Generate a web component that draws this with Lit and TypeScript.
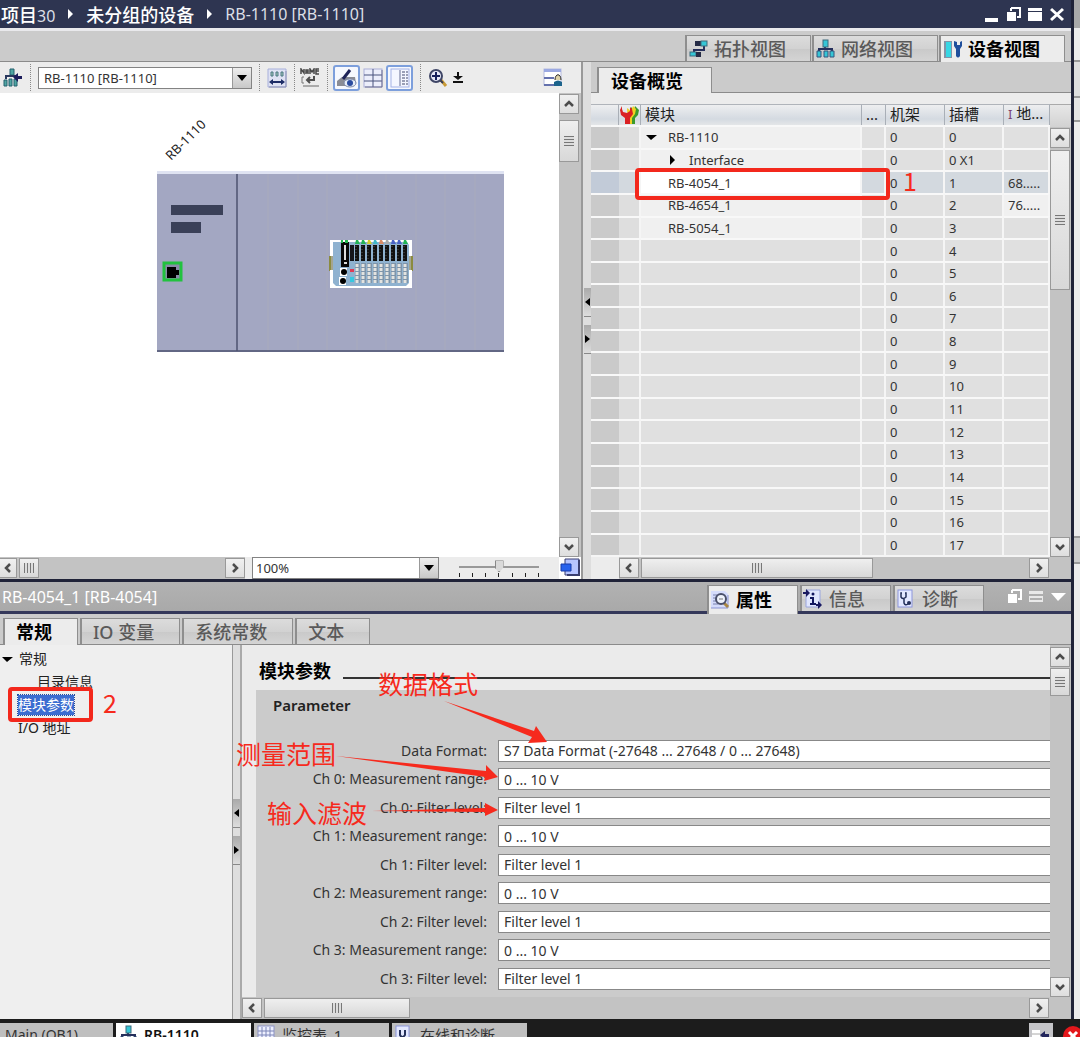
import { LitElement, html, svg, css, nothing } from "lit";
import { customElement } from "lit/decorators.js";
import { classMap } from "lit/directives/class-map.js";

interface DeviceRow {
  name: string;
  rack: string;
  slot: string;
  address: string;
  level: number;
  marker?: "open" | "closed";
}

const modules: DeviceRow[] = [
  { name: "RB-1110", rack: "0", slot: "0", address: "", level: 1, marker: "open" },
  { name: "Interface", rack: "0", slot: "0 X1", address: "", level: 2, marker: "closed" },
  { name: "RB-4054_1", rack: "0", slot: "1", address: "68.....", level: 1 },
  { name: "RB-4654_1", rack: "0", slot: "2", address: "76.....", level: 1 },
  { name: "RB-5054_1", rack: "0", slot: "3", address: "", level: 1 },
];
for (let slot = 4; slot <= 17; slot++) {
  modules.push({ name: "", rack: "0", slot: String(slot), address: "", level: 1 });
}

const parameters: Array<[string, string]> = [
  ["Data Format:", "S7 Data Format (-27648 ... 27648 / 0 ... 27648)"],
];
for (let channel = 0; channel < 4; channel++) {
  parameters.push([`Ch ${channel}: Measurement range:`, "0 ... 10 V"]);
  parameters.push([`Ch ${channel}: Filter level:`, "Filter level 1"]);
}

const icon = (body: unknown, w = 20, h = 20) =>
  html`<svg class="icon" width=${w} height=${h} viewBox="0 0 ${w} ${h}" aria-hidden="true">${body}</svg>`;

const icons = {
  topology: icon(svg`
    <path d="M15 7v4H5v3" fill="none" stroke="#26305c" stroke-width="2"/>
    <rect x="6" y="2" width="6" height="5" fill="#252b45"/><rect x="12" y="2" width="6" height="5" fill="#35c6d6" stroke="#3c6a7c"/>
    <rect x="1" y="13" width="6" height="4" fill="#35c6d6" stroke="#3c6a7c"/><rect x="7" y="13" width="5" height="5" fill="#252b45"/>`),
  network: icon(svg`
    <path d="M9 6v5M3 13v-3h13v3" fill="none" stroke="#26305c" stroke-width="2"/>
    <rect x="7" y="1" width="5" height="7" fill="#35c6d6" stroke="#3c6a7c"/>
    <path d="M1 12h4v6H1zM8 12h4v6H8zM14 12h4v6h-4z" fill="#35c6d6" stroke="#36557c"/>`),
  device: icon(svg`
    <rect x="1" y="2" width="8" height="17" fill="#8294a8"/><rect x="3" y="3" width="5" height="15" fill="#36d6e4"/>
    <path d="M11 2v5l2 3v7q2 3 4 0v-7l2-3V2l-2 1v3h-3V3z" fill="#1f4f9c"/>`),
  goUp: icon(svg`
    <path d="M7 1h4v6H7zM1 12h3v6H1zM6 11h3v7H6zM11 11h3v7h-3z" fill="#4fa5a2" stroke="#24616f"/>
    <path d="M3 11V8h11" fill="none" stroke="#28385e" stroke-width="2"/>
    <path d="M10 9l5-4v3h4v3h-4v3z" fill="#1c1c5c"/>`),
  arrange: icon(svg`
    <path d="M1 1h18v18H1z" fill="#dfe2f3" stroke="#a8b0dc"/><path d="M2 19h17V3" fill="none" stroke="#8d92b4"/>
    <path d="M4 4h2v4H4zM9 4h2v4H9zM14 4h2v4h-2z" fill="#a6ccb8" stroke="#4a7782"/>
    <path d="M2 14l4-3v2h8v-2l4 3-4 3v-2H6v2z" fill="#1d2c66"/>`),
  name: icon(svg`
    <path d="M1 6V1l3 4V1M6 6V2h2v4M6 4h2M10 6V1l2 3 2-3v5M19 1h-3v5h3M16 3h3" fill="none" stroke="#484848" stroke-width="1.5"/>
    <path d="M4 9H2v6h2" fill="none" stroke="#777"/><path d="M3 18h16" stroke="#aaa" stroke-width="2"/>
    <path d="M14 8v4H7M10 9l-3 3 3 3" fill="none" stroke="#505050" stroke-width="2"/>`),
  display: icon(svg`
    <path d="M0 13l5-4h13l1 6-4 3H0z" fill="#8a8c95"/><path d="M6 11l7-9" stroke="#1e2358" stroke-width="3"/>
    <ellipse cx="13" cy="15" rx="6" ry="4" fill="#e7edf7" stroke="#7a87a8"/><circle cx="13" cy="15" r="3" fill="#2b4ca0"/>`, 20, 20),
  grid: icon(svg`
    <rect x="1" y="1" width="18" height="18" fill="#eceefb" stroke="#a9aed8"/>
    <path d="M10 1v18M1 7h18M1 13h18" stroke="#49527c"/><path d="M2 19h17V2" stroke="#6e7192" fill="none"/>`),
  panels: icon(svg`
    <rect x="1" y="1" width="18" height="18" fill="#f4f6ff" stroke="#a4b2e6"/>
    <path d="M10 2v16" stroke="#666e92" stroke-width="1"/>
    <path d="M12 4h3M12 7h3M12 10h3M12 13h3M12 16h3M16 4h2M16 7h2M16 10h2M16 13h2M16 16h2" stroke="#41496e"/>`),
  zoom: icon(svg`
    <path d="M13 12l5 6" stroke="#c99a35" stroke-width="3"/><path d="M12 12l3 3" stroke="#343a56" stroke-width="2"/>
    <circle cx="8" cy="8" r="6" fill="#e7e9f8" stroke="#3f4666" stroke-width="2"/><path d="M4 8h8M8 4v8" stroke="#16205c" stroke-width="2"/>`),
  down: icon(svg`<path d="M4 1h2v4h4L5 9 0 5h4zM0 10h10v2H0z" fill="#111"/>`, 10, 13),
  layout: icon(svg`
    <rect x="1" y="1" width="17" height="16" fill="#fff" stroke="#b3b9de"/><path d="M1 1h17v3H1z" fill="#9ba9e2"/>
    <path d="M1 10h10M1 17h10" stroke="#6471ad" stroke-width="2"/><path d="M12 12c0-7 6-7 6 0" fill="#ddd2a8" stroke="#2a2a2a"/>
    <path d="M11 18v-4q4-3 8 0v4z" fill="#1c638c"/>`),
  wrench: icon(svg`
    <path d="M12 2l3 3 1-4 4 4-1 5-3 3v6h-4v-8z" fill="#3c9a2d"/><path d="M8 3l4 3 2-5 3 3-1 5-3 4v6h-4z" fill="#f0d022"/>
    <path d="M3 1L1 5l1 5 4 3v6h5v-6l3-4-1-5-2-2v4l-3 2-4-1-1-3z" fill="#da2023"/>`),
  properties: icon(svg`
    <path d="M1 1h14l3 3v14H1z" fill="#d5dcfb"/><path d="M1 18h17V5" stroke="#8792d2" fill="none"/>
    <path d="M3 5h4M3 8h3M3 11h4M3 14h5" stroke="#7881ae"/><path d="M14 13l4 4" stroke="#a98743" stroke-width="3"/>
    <circle cx="11" cy="9" r="5" fill="#eef2fb" stroke="#4a506a" stroke-width="2"/><path d="M9 9h4" stroke="#777"/>`),
  info: icon(svg`
    <path d="M3 1h14v17H3z" fill="#dfe5fd" stroke="#9aa5dd"/><circle cx="10" cy="5" r="1.5" fill="#11165f"/>
    <path d="M7 9h3v6M7 15h6" fill="none" stroke="#11165f" stroke-width="2"/>
    <path d="M0 3h3V0l4 4-4 4V5H0zM13 15h2v-3l4 4-4 4v-3h-2z" fill="#191960"/>`),
  diagnosis: icon(svg`
    <rect x="2" y="1" width="14" height="17" fill="#e3e8ff" stroke="#8c96dc"/>
    <path d="M6 4H5v4q2 3 5 0V4H9M8 10v4q1 3 4 1" fill="none" stroke="#25305a" stroke-width="1.5"/><circle cx="13" cy="14" r="2" fill="#25305a"/>`),
  overview: icon(svg`
    <path d="M5 1h14v16H5z" fill="#b6c4ff" stroke="#3a3f70"/><path d="M7 17h12V2" fill="none" stroke="#3a3f70" stroke-width="2"/>
    <path d="M1 6h10v7H1z" fill="#2862ed" stroke="#173baa"/>`),
  restore: icon(svg`<path d="M5 1h9v9h-3M5 4V1" fill="none" stroke="#fff" stroke-width="2"/><path d="M1 5h9v9H1z" fill="#fff"/>`, 15, 15),
  minimize: icon(svg`<path d="M1 11h13v4H1z" fill="#fff"/>`, 15, 15),
  maximize: icon(svg`<path d="M0 1h14v3H0zM0 5h14v9H0z" fill="#fff"/>`, 15, 15),
  close: icon(svg`<path d="M1 2l12 11M13 2L1 13" stroke="#fff" stroke-width="3"/>`, 15, 15),
  split: icon(svg`<path d="M0 2h14v3H0zM0 7h14v6H0z" fill="#e9e9e9"/><path d="M1 9h12v2H1z" fill="#b0b0b0"/>`, 15, 15),
  collapse: icon(svg`<path d="M0 4h15L7 12z" fill="#fff"/>`, 15, 15),
  sheet: icon(svg`
    <rect x="1" y="1" width="16" height="18" fill="#eef0ff" stroke="#8d94c8"/>
    <path d="M1 6h16M1 10h16M1 14h16M5 2v16M9 2v16M13 2v16" stroke="#7d86b8"/>`),
  online: icon(svg`<rect x="1" y="1" width="13" height="18" fill="#e3e8ff" stroke="#8c96dc"/><path d="M5 5v5q2 4 5 0V5" fill="none" stroke="#25305a" stroke-width="2"/>`),
};

const chevrons: Record<string, string> = {
  up: "M2 8l4-4 4 4",
  down: "M2 4l4 4 4-4",
  left: "M8 2L4 6l4 4",
  right: "M4 2l4 4-4 4",
};

const arrowButton = (dir: string, label: string) => html`
  <button class="scroll-btn" aria-label=${label}>
    <svg width="12" height="12" viewBox="0 0 12 12" aria-hidden="true">
      <path d=${chevrons[dir]} fill="none" stroke="#4c4c4c" stroke-width="2.5" />
    </svg>
  </button>`;

const scrollBar = (vertical: boolean, variant: string) => html`
  <div class="scroll ${vertical ? "vertical" : "horizontal"} ${variant}">
    ${arrowButton(vertical ? "up" : "left", vertical ? "向上滚动" : "向左滚动")}
    <div class="thumb"><i class="grip"></i></div>
    <div class="track"></div>
    ${arrowButton(vertical ? "down" : "right", vertical ? "向下滚动" : "向右滚动")}
  </div>`;

const triangle = (dir: "open" | "closed") => html`
  <svg class="marker" width="12" height="12" viewBox="0 0 12 12" aria-hidden="true">
    <path d=${dir === "open" ? "M1 4h11L6 9z" : "M4 1v10l5-5z"} fill="#000" />
  </svg>`;

const splitter = (variant: string) => html`
  <div class="splitter ${variant}">
    <button class="split-btn" aria-label="向左折叠"><svg width="5" height="8" viewBox="0 0 5 8"><path d="M5 0v8L0 4z" /></svg></button>
    <button class="split-btn" aria-label="向右折叠"><svg width="5" height="8" viewBox="0 0 5 8"><path d="M0 0v8l5-4z" /></svg></button>
  </div>`;

@customElement("app-root")
export class AppRoot extends LitElement {
  static styles = css`
    :host {
      display: block;
      font-family: "Noto Sans", "Noto Sans CJK SC", sans-serif;
      font-size: 13px;
      color: #333;
    }
    * { box-sizing: border-box; }
    button, input, select { font: inherit; color: inherit; margin: 0; padding: 0; border-radius: 0; }
    button { background: none; border: 0; }
    .icon, svg { display: block; flex: none; }

    .screen { position: relative; display: flex; flex-direction: column; height: 100vh; overflow: hidden; background: #cbcbcb; }
    .desk { display: flex; flex: 1; min-height: 0; }
    .window { display: flex; flex-direction: column; flex: 1; min-width: 0; border-right: 3px solid #202338; }
    .neighbour { display: flex; flex-direction: column; width: 6px; background: #ececec; }
    .neighbour i { border-bottom: 2px solid #999; }
    .neighbour .n1 { height: 28px; background: #a9a9a9; border: 0; }
    .neighbour .n2 { height: 34px; }
    .neighbour .n3 { height: 36px; background: #dedede; }
    .neighbour .n4 { height: 24px; background: #e4e4e4; }
    .neighbour .n5 { height: 416px; }
    .neighbour .n6 { height: 26px; background: #ccc; }

    .titlebar { display: flex; align-items: center; gap: 13px; height: 28px; flex: none; padding: 0 6px 0 1px; background: #2e3551; color: #dcdfe6; font-size: 16px; }
    .cjk { font-size: 18px; font-weight: 500; color: #fff; }
    .controls { display: flex; gap: 7px; margin-left: auto; }

    .view-tabs { display: flex; justify-content: flex-end; align-items: flex-end; gap: 1px; height: 34px; flex: none; padding: 0 6px 0 0; border-top: 3px solid #e9e9ec; border-bottom: 1px solid #8b8b8b; background: #cbcbcb; }
    .tab { display: flex; align-items: center; height: 26px; padding: 0 2px; border: 1px solid #8e8e8e; border-left-width: 2px; border-bottom: 0; background: linear-gradient(#dcdcdc, #d2d2d2 50%, #c9c9c9 51%, #d4d4d4); color: #5a5a5a; font-size: 18px; font-weight: 500; line-height: 22px; white-space: nowrap; }
    .tab.active { background: #ececec; color: #000; font-weight: 700; }
    .view-tabs .tab { width: 126px; gap: 5px; }
    .view-tabs .active { margin-bottom: -1px; height: 27px; }

    .editor { display: flex; flex: 519 1 0; min-height: 0; border-bottom: 3px solid #202338; }
    .graphic { display: flex; flex-direction: column; flex: 581 1 0; min-width: 0; background: #ececec; }
    .toolbar { display: flex; align-items: center; height: 31px; flex: none; padding: 0 18px 0 3px; gap: 5px; }
    .tool { display: grid; place-items: center; width: 20px; height: 26px; }
    .tool.on { width: 27px; border: 2px solid #7d9fdc; border-radius: 3px; background: #f6f8fe; }
    .toggles { display: flex; gap: 3px; }
    .sep { height: 27px; margin: 0 2px; border-left: 1px dotted #888; }
    .tool + .sep + .toggles, .tool + .sep + .tool { margin-left: -2px; }
    .spring { flex: 1; }
    .combo { display: flex; height: 22px; border: 1px solid #838383; background: #fff; }
    .combo select { appearance: none; flex: 1; min-width: 0; border: 0; padding: 0 5px; background: #fff; outline: none; }
    .drop { display: grid; place-items: center; width: 19px; border-left: 1px solid #999; background: linear-gradient(#eee, #c8c8c8); }
    .device-select { width: 214px; }
    .zoom-select select { padding: 0 3px; }
    .canvas-row { display: flex; flex: 1; min-height: 0; }
    .canvas { flex: 1; min-width: 0; overflow: hidden; background: #fff; }
    .canvas text { font-size: 13px; fill: #222; }
    .status { display: flex; height: 22px; flex: none; }
    .zoom-select { width: 187px; margin-left: 7px; }
    .slider { display: flex; flex-direction: column; width: 80px; margin: 2px 20px 0; }
    .slider input { appearance: none; width: 100%; height: 14px; background: linear-gradient(#999, #999) 0 7px / 100% 2px no-repeat; }
    .slider input::-webkit-slider-thumb { appearance: none; width: 9px; height: 12px; background: #d9d9d9; border: 1px solid #888; clip-path: polygon(0 0, 100% 0, 100% 60%, 50% 100%, 0 60%); }
    .ticks { display: flex; justify-content: space-between; }
    .ticks i { width: 1px; height: 4px; background: #222; }
    .corner { display: grid; place-items: center; width: 22px; background: #fff; }

    .scroll { display: flex; background: #c3c3c3; flex: none; gap: 2px; }
    .vertical { flex-direction: column; width: 21px; }
    .horizontal { height: 22px; padding: 1px 0; }
    .scroll-btn { display: grid; place-items: center; width: 20px; height: 20px; flex: none; border: 1px solid #999; background: linear-gradient(#f0f0f0, #dedede); }
    .thumb { display: grid; place-items: center; flex: none; border: 1px solid #999; background: linear-gradient(#efefef, #d8d8d8); }
    .vertical .thumb { width: 20px; }
    .horizontal .thumb { height: 20px; }
    .track { flex: 1; }
    .grip { width: 10px; height: 10px; background: repeating-linear-gradient(#777 0 1px, #ddd 1px 3px); }
    .horizontal .grip { background: repeating-linear-gradient(90deg, #777 0 1px, #ddd 1px 3px); }
    .canvas-v { width: 22px; padding-top: 1px; }
    .canvas-v .thumb { height: 42px; margin-top: 4px; }
    .canvas-h { flex: 1; }
    .canvas-h .thumb { width: 20px; }
    .canvas-h .scroll-btn:first-child { width: 17px; border-left: 0; }
    .table-v { padding-top: 1px; }
    .table-v .thumb { height: 140px; }
    .table-h { margin-left: 28px; }
    .table-h .thumb { width: 232px; }
    .table-h, .param-h { padding-right: 22px; }
    .param-v { padding-top: 2px; gap: 1px; }
    .param-v .thumb { height: 28px; }
    .param-h .thumb { width: 146px; }

    .splitter { display: flex; flex-direction: column; align-items: flex-end; justify-content: center; gap: 8px; flex: none; width: 10px; border-left: 2px solid #999; background: #dedede; }
    .splitter.inner { align-items: flex-start; border-left: 1px solid #999; border-right: 2px solid #aaa; }
    .split-btn { display: grid; place-items: center; width: 7px; height: 29px; border-bottom: 1px solid #888; background: linear-gradient(#aaa, #ddd); }

    .overview { display: flex; flex-direction: column; flex: 480 1 0; min-width: 0; background: #ececec; }
    .overview-tabs { display: flex; align-items: flex-end; height: 31px; flex: none; padding-left: 6px; border-bottom: 1px solid #8b8b8b; background: #cbcbcb; }
    .overview-tabs .tab { width: 115px; margin-bottom: -1px; padding-left: 12px; }
    .table-row { display: flex; flex: 1; min-height: 0; margin-top: 11px; }
    .table-wrap { flex: 1; min-width: 0; border-bottom: 2px solid #f5f5f5; }
    .table-side { display: flex; flex-direction: column; background: #d5d5d5; }
    .table-side::before { content: ""; height: 22px; border-top: 1px solid #aaa; background: linear-gradient(#e7e7e7, #d2d2d2); }
    .table-side .scroll { flex: 1; }
    table { width: 100%; height: 100%; border-collapse: separate; border-spacing: 0; table-layout: fixed; }
    th { height: 21px; padding: 0 4px 2px; border-top: 1px solid #b0b4ba; border-right: 1px solid #a9afb7; background: linear-gradient(#eeeff0, #d4dae1 70%, #e4e6e8); color: #222; font-size: 15px; font-weight: 400; line-height: 17px; text-align: left; white-space: nowrap; overflow: hidden; }
    th.tools { padding: 0; }
    th .mark { color: #7b3f70; font-size: 13px; }
    td { padding: 0 4px; border-top: 2px solid #f8f8f8; border-right: 2px solid #f5f5f5; background: #e0e0e0; line-height: 18px; white-space: nowrap; overflow: hidden; }
    td.rowhead { border-right: 0; background: #cacaca; }
    td.tools { background: #dedede; }
    td.filled { background: #f0f0f0; }
    .selected td { background: #d3d9df; }
    .selected td.rowhead { background: #c2cbd8; }
    .selected td.filled { background: #fff; }
    .selected td.addr { background: #d3d9df; }
    .cell { display: flex; align-items: center; padding-left: 23px; }
    .cell.marked { gap: 11px; padding-left: 0; }
    .cell.level-2 { padding-left: 21px; }
    .col-head { width: 28px; } .col-tools { width: 22px; } .col-dots { width: 24px; }
    .col-rack, .col-slot { width: 59px; } .col-addr { width: 46px; }

    .inspector { display: flex; flex-direction: column; flex: 438 1 0; min-height: 0; }
    .inspector-bar { display: flex; align-items: flex-end; height: 32px; flex: none; gap: 2px; border-bottom: 3px solid #34385a; background: linear-gradient(#b2b2b2, #a9a9a9); }
    .inspector-bar h2 { align-self: center; flex: 1; margin: 0; padding-left: 2px; color: #fff; font-size: 16px; font-weight: 400; line-height: 20px; }
    .inspector-bar .tab { width: 91px; gap: 6px; padding: 0 1px; }
    .inspector-bar .active { height: 29px; margin-bottom: -3px; }
    .inspector-bar .controls { align-self: center; width: 85px; margin: 0; padding-left: 21px; }
    .sub-tabs { display: flex; align-items: flex-end; height: 31px; flex: none; gap: 2px; padding-left: 3px; border-bottom: 1px solid #8b8b8b; background: #cbcbcb; }
    .sub-tabs .tab { padding: 0 25px 0 11px; }
    .inspector-body { display: flex; flex: 1; min-height: 0; background: #ebebeb; }
    .sub-tabs .active { margin-bottom: -1px; height: 27px; }
    .tree { width: 232px; flex: none; margin: 0; padding: 2px 0; list-style: none; background: #efefef; color: #222; font-size: 14px; }
    .tree li { display: flex; align-items: center; gap: 6px; height: 23px; padding-left: 1px; }
    .tree .child { padding-left: 37px; }
    .tree .near { padding-left: 18px; }
    .tree a { color: inherit; text-decoration: none; line-height: 20px; }
    .tree .current a { background: #3b6cd0; color: #fff; outline: 1px dotted #274b9a; }
    .params { display: flex; flex-direction: column; flex: 1; min-width: 0; }
    .param-row { display: flex; flex: 1; min-height: 0; }
    .sheet { display: flex; flex-direction: column; flex: 1; min-width: 0; padding-left: 14px; }
    .section { display: flex; align-items: center; gap: 12px; height: 45px; padding: 6px 0 0 3px; flex: none; }
    .section h3 { margin: 0; color: #000; font-size: 18px; line-height: 24px; }
    .section::after { content: ""; flex: 1; height: 2px; margin-top: 14px; background: #333; }
    .group { display: flex; flex-direction: column; flex: 1; min-height: 0; padding: 3px 0 4px; background: #cbcbcb; }
    .group h4 { height: 43px; flex: none; margin: 0; padding-left: 17px; color: #222; font-size: 15px; font-weight: 600; line-height: 24px; }
    .fields { display: grid; grid-template-columns: 231px 1fr; grid-auto-rows: 1fr; align-items: center; column-gap: 11px; flex: 1; font-size: 14px; }
    .fields label { text-align: right; line-height: 18px; }
    .fields input { width: 100%; height: 22px; padding: 0 5px; border: 1px solid #888; border-right: 0; background: #fff; outline: none; }

    .taskbar { display: flex; gap: 3px; height: 18px; flex: none; padding-top: 4px; overflow: hidden; background: #1c1c1c; }
    .task { display: flex; align-items: center; gap: 5px; width: 135px; height: 23px; padding: 0 3px; background: #bfbfbf; color: #333; font-size: 15px; line-height: 20px; white-space: nowrap; }
    .task.first { width: 113px; padding: 0 5px; font-size: 14px; }
    .task.active { background: #fff; color: #111; font-size: 14px; font-weight: 600; }
    .task-tool { width: 24px; height: 23px; margin-left: auto; background: #c4c4c8; }
    .error { width: 17px; margin-left: 7px; padding-top: 3px; }

    .notes { position: absolute; inset: 0; pointer-events: none; fill: #f62a1d; }
    .notes rect { fill: none; stroke: #f3281c; stroke-width: 4; }
    .notes text { font-family: "Noto Sans CJK SC", sans-serif; font-size: 25px; font-weight: 400; }
  `;

  private renderTitle() {
    const arrow = html`<svg width="5" height="10" viewBox="0 0 5 10" aria-hidden="true"><path d="M0 0v10l5-5z" fill="#fff" /></svg>`;
    return html`
      <header class="titlebar">
        <span><span class="cjk">项目</span>30</span>${arrow}<span class="cjk">未分组的设备</span>${arrow}<span>RB-1110 [RB-1110]</span>
        <div class="controls">
          <button aria-label="最小化">${icons.minimize}</button>
          <button aria-label="浮动">${icons.restore}</button>
          <button aria-label="最大化">${icons.maximize}</button>
          <button aria-label="关闭">${icons.close}</button>
        </div>
      </header>
      <nav class="view-tabs">
        <button class="tab">${icons.topology}拓扑视图</button>
        <button class="tab">${icons.network}网络视图</button>
        <button class="tab active">${icons.device}设备视图</button>
      </nav>`;
  }

  private renderStation() {
    const bays = Array.from({ length: 9 }, (_, i) => i);
    const leds = ["#22b455", "#22b455", "#d3cf2c", "#40b8c8", "#d88b66", "#aaa", "#4a63c8", "#4a63c8", "#22b455"];
    return html`
      <svg width="540" height="280" viewBox="0 0 540 280" role="img" aria-label="RB-1110">
        <text transform="translate(171 68) rotate(-45)">RB-1110</text>
        <rect x="157" y="78" width="347" height="3" fill="#dfe3f2" />
        <rect x="157" y="81" width="347" height="178" fill="#a3a7c2" />
        ${[268, 298, 327, 357, 386, 416, 445, 475].map((x) => svg`<path d="M${x} 81v177" stroke="#a9abbc" />`)}
        <path d="M237 81v177M157 258h347" stroke="#4e5370" stroke-width="1.5" />
        <path d="M171 112h52v10h-52zM171 129h30v11h-30z" fill="#3a4058" />
        <rect x="164" y="170" width="17" height="17" fill="#898da8" stroke="#22c23f" stroke-width="3" />
        <path d="M167 174h9v3h3v5h-3v3h-9z" fill="#000" />
        <path d="M329 163h84v15h-84z" fill="#8b8b3f" />
        <path d="M330 147h82v16h-3v14h3v18h-82v-18h3v-14h-3z" fill="#fff" />
        <path d="M331 163h2v14h-2zM409 163h2v14h-2z" fill="#a5a58e" />
        <path d="M333 149h74l2 3v38l-3 3h-70l-3-3v-38z" fill="#8fb2d0" />
        <path d="M341 149h8v25h-8z" fill="#080808" /><path d="M344 152h2v15h-2zM344 169h3v2h-3z" fill="#ddd" />
        <path d="M340 175h7v8h-7zM339 184h7v8h-7z" fill="#fff" />
        <circle cx="344" cy="179" r="3" fill="#000" /><circle cx="343" cy="188" r="3" fill="#000" />
        <path d="M341 147h2v3h-2zM345 147h3v3h-3z" fill="#25b950" />
        <path d="M350 152h4v16h-4z" fill="#15151a" /><path d="M350 176h4v3h-4z" fill="#df3b55" /><path d="M350 184h4v5h-4z" fill="#36c8df" />
        ${bays.map((i) => {
          const x = 355 + i * 6;
          return svg`
            <path d="M${x + 1} 147l2 0 2 4h-5z" fill=${leds[i]} />
            <path d="M${x} 152h4v16h-4z" fill="#111" />
            <path d="M${x + 1} 153v14" stroke="#555" stroke-dasharray="1 2" />
            <path d="M${x} 170h5v20h-5z" fill="#7f95aa" />
            <path d="M${x + 2} 171v19" stroke="#e3e3e0" stroke-width="3" stroke-dasharray="3 1" />`;
        })}
      </svg>`;
  }

  private renderCombo(cls: string, label: string, value: string) {
    return html`
      <span class="combo ${cls}">
        <select aria-label=${label}><option>${value}</option></select>
        <span class="drop"><svg width="10" height="6" viewBox="0 0 10 6" aria-hidden="true"><path d="M0 0h10L5 6z" /></svg></span>
      </span>`;
  }

  private renderGraphic() {
    return html`
      <section class="graphic">
        <div class="toolbar">
          <button class="tool" aria-label="上一级">${icons.goUp}</button>
          <i class="sep"></i>
          ${this.renderCombo("device-select", "设备", "RB-1110 [RB-1110]")}
          <i class="sep"></i>
          <button class="tool" aria-label="排列">${icons.arrange}</button>
          <i class="sep"></i>
          <button class="tool" aria-label="名称">${icons.name}</button>
          <i class="sep"></i>
          <span class="toggles">
            <button class="tool on" aria-label="显示">${icons.display}</button>
            <button class="tool" aria-label="网格">${icons.grid}</button>
            <button class="tool on" aria-label="面板">${icons.panels}</button>
          </span>
          <i class="sep"></i>
          <button class="tool" aria-label="缩放">${icons.zoom}</button>
          <button aria-label="缩放选项">${icons.down}</button>
          <span class="spring"></span>
          <button class="tool" aria-label="保存布局">${icons.layout}</button>
        </div>
        <div class="canvas-row">
          <div class="canvas">${this.renderStation()}</div>
          ${scrollBar(true, "canvas-v")}
        </div>
        <div class="status">
          ${scrollBar(false, "canvas-h")}
          ${this.renderCombo("zoom-select", "缩放比例", "100%")}
          <div class="slider">
            <input type="range" min="0" max="100" value="50" aria-label="缩放滑块" />
            <span class="ticks">${Array.from({ length: 7 }, () => html`<i></i>`)}</span>
          </div>
          <button class="corner" aria-label="总览">${icons.overview}</button>
        </div>
      </section>`;
  }

  private renderOverview() {
    return html`
      <section class="overview">
        <nav class="overview-tabs"><button class="tab active">设备概览</button></nav>
        <div class="table-row">
          <div class="table-wrap">
            <table>
              <colgroup>
                <col class="col-head" /><col class="col-tools" /><col /><col class="col-dots" />
                <col class="col-rack" /><col class="col-slot" /><col class="col-addr" />
              </colgroup>
              <thead>
                <tr><th></th><th class="tools">${icons.wrench}</th><th>模块</th><th>...</th><th>机架</th><th>插槽</th><th><span class="mark">I</span> 地...</th></tr>
              </thead>
              <tbody>
                ${modules.map((row, i) => html`
                  <tr class=${classMap({ selected: i === 2 })}>
                    <td class="rowhead"></td>
                    <td class="tools"></td>
                    <td class=${classMap({ filled: row.name !== "" })}>
                      <span class="cell level-${row.level} ${row.marker ? "marked" : ""}">${row.marker ? triangle(row.marker) : nothing}${row.name}</span>
                    </td>
                    <td></td>
                    <td>${row.rack}</td>
                    <td>${row.slot}</td>
                    <td class=${classMap({ addr: true, filled: row.address !== "" })}>${row.address}</td>
                  </tr>`)}
              </tbody>
            </table>
          </div>
          <div class="table-side">${scrollBar(true, "table-v")}</div>
        </div>
        ${scrollBar(false, "table-h")}
      </section>`;
  }

  private renderInspector() {
    return html`
      <section class="inspector">
        <div class="inspector-bar">
          <h2>RB-4054_1 [RB-4054]</h2>
          <button class="tab active">${icons.properties}属性</button>
          <button class="tab">${icons.info}信息</button>
          <button class="tab">${icons.diagnosis}诊断</button>
          <div class="controls">
            <button aria-label="浮动">${icons.restore}</button>
            <button aria-label="拆分">${icons.split}</button>
            <button aria-label="折叠">${icons.collapse}</button>
          </div>
        </div>
        <nav class="sub-tabs">
          <button class="tab active">常规</button>
          <button class="tab">IO 变量</button>
          <button class="tab">系统常数</button>
          <button class="tab">文本</button>
        </nav>
        <div class="inspector-body">
          <ul class="tree">
            <li>${triangle("open")}<a href="#general">常规</a></li>
            <li class="child"><a href="#catalog">目录信息</a></li>
            <li class="near current"><a href="#module">模块参数</a></li>
            <li class="near"><a href="#address">I/O 地址</a></li>
          </ul>
          ${splitter("inner")}
          <div class="params">
            <div class="param-row">
              <div class="sheet">
                <div class="section"><h3>模块参数</h3></div>
                <div class="group">
                  <h4>Parameter</h4>
                  <div class="fields">
                    ${parameters.map(([label, value], i) => html`
                      <label for="param-${i}">${label}</label>
                      <input id="param-${i}" type="text" .value=${value} />`)}
                  </div>
                </div>
              </div>
              ${scrollBar(true, "param-v")}
            </div>
            ${scrollBar(false, "param-h")}
          </div>
        </div>
      </section>`;
  }

  private renderNotes() {
    return html`
      <svg class="notes" width="1080" height="1037" viewBox="0 0 1080 1037">
        <rect x="637" y="170" width="251" height="28" rx="2" />
        <rect x="10" y="689" width="81" height="31" rx="2" />
        <text x="903" y="191">1</text>
        <text x="103" y="713">2</text>
        <text x="378" y="694">数据格式</text>
        <text x="236" y="764">测量范围</text>
        <text x="267" y="823">输入滤波</text>
        <path d="M444 701l90 30 2-5 11 16-19 1 4-6z" />
        <path d="M336 756l150 15 0-6 12 12-14 4 1-4z" />
        <path d="M372 811l113-3 0-5 13 7-13 6 0-4z" />
      </svg>`;
  }

  render() {
    return html`
      <div class="screen">
        <div class="desk">
          <main class="window">
            ${this.renderTitle()}
            <div class="editor">${this.renderGraphic()}${splitter("")}${this.renderOverview()}</div>
            ${this.renderInspector()}
          </main>
          <aside class="neighbour"><i class="n1"></i><i class="n2"></i><i class="n3"></i><i class="n4"></i><i class="n5"></i><i class="n6"></i></aside>
        </div>
        <footer class="taskbar">
          <button class="task first">Main (OB1)</button>
          <button class="task active">${icons.network}RB-1110</button>
          <button class="task">${icons.sheet}监控表_1</button>
          <button class="task">${icons.online}在线和诊断</button>
          <button class="task-tool" aria-label="切换窗口">${icon(svg`<path d="M3 3h8v12H3z" fill="#fff"/><path d="M3 7h8M3 11h8" stroke="#aaa"/><path d="M11 8l5-4v3h4v9h-3v-6h-1v3z" fill="#22255c"/>`, 22, 16)}</button>
          <span class="error">${icon(svg`<circle cx="10" cy="10" r="10" fill="#e3171b"/><path d="M6 6l8 8M14 6l-8 8" stroke="#fff" stroke-width="3"/>`)}</span>
        </footer>
        ${this.renderNotes()}
      </div>`;
  }
}
